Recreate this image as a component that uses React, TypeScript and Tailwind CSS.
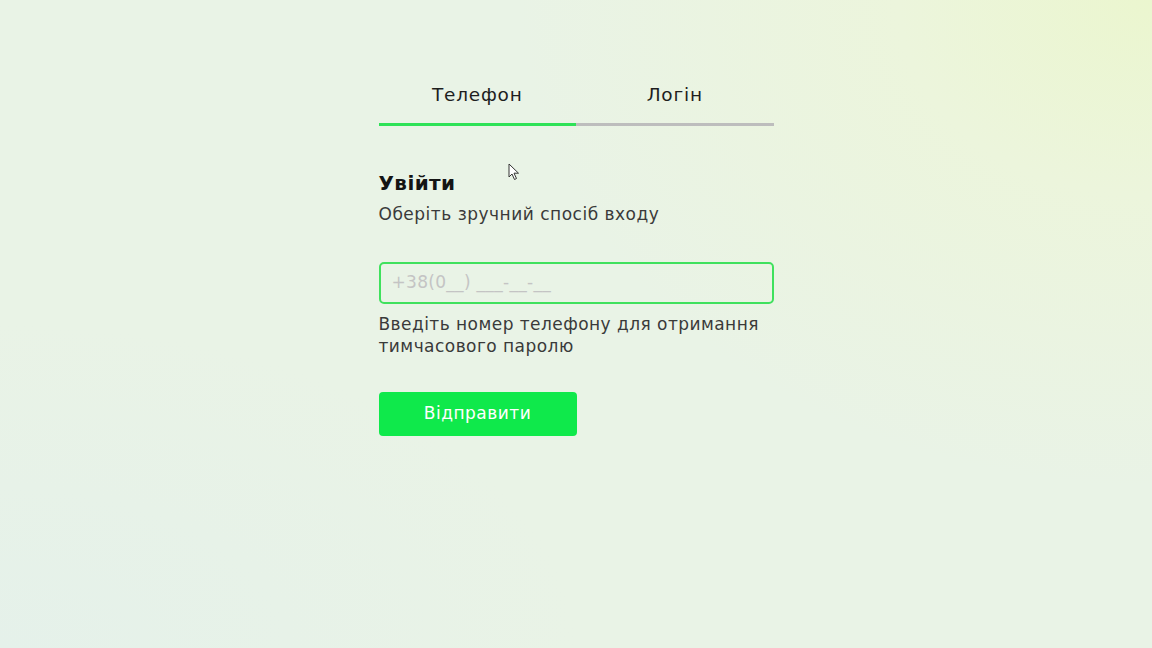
import React from "react";

export default function App() {
  return (
    <div
      className="relative w-[1152px] h-[648px] overflow-hidden bg-[#e9f3e6] bg-[radial-gradient(ellipse_55%_75%_at_100%_0%,#ebf6cf_0%,#ecf5dc_40%,rgba(233,243,230,0)_100%),radial-gradient(ellipse_50%_50%_at_0%_100%,#e5f1ea_0%,rgba(229,241,234,0)_100%)]"
      style={{ fontFamily: '"DejaVu Sans", "Noto Sans", sans-serif' }}
    >
      <div className="flex justify-center pt-[81px]">
        <div className="w-[395px] flex flex-col">
          <div className="flex">
            <div className="flex-1 flex flex-col items-center">
              <span className="text-[18.5px] leading-[28px] text-[#1e1e1e] tracking-[0.8px]">Телефон</span>
              <div className="mt-[14px] h-[3px] w-full bg-[#2ee257]" />
            </div>
            <div className="flex-1 flex flex-col items-center">
              <span className="text-[18.5px] leading-[28px] text-[#1e1e1e] tracking-[0.8px]">Логін</span>
              <div className="mt-[14px] h-[3px] w-full bg-[#bdbdbd]" />
            </div>
          </div>
          <h1 className="mt-[43px] text-[20px] leading-[28px] font-bold text-[#141414] tracking-[0.4px]">Увійти</h1>
          <p className="mt-[5px] text-[17px] leading-[24px] text-[#3a3a3a] tracking-[0.5px]">Оберіть зручний спосіб входу</p>
          <div className="mt-[36px] h-[42px] rounded-[5px] border-2 border-[#3fe15d] flex items-center px-[11px]">
            <span className="text-[17px] text-[#c4c4c4] tracking-[0.3px]">+38(0__) ___-__-__</span>
          </div>
          <p className="mt-[9px] text-[17px] leading-[22px] text-[#3a3a3a] tracking-[0.45px]">
            Введіть номер телефону для отримання
            <br />
            тимчасового паролю
          </p>
          <button className="mt-[35px] w-[198px] h-[44px] rounded-[4px] bg-[#0fe94b] text-white text-[17px] tracking-[0.5px]">
            Відправити
          </button>
        </div>
      </div>
      <svg className="absolute left-[508px] top-[163px]" width="12" height="18" viewBox="0 0 12 18">
        <path d="M1 1 L1 14 L4 11 L6.5 16.5 L8.5 15.5 L6 10.2 L10.5 10.2 Z" fill="#fff" stroke="#333" strokeWidth="1" strokeLinejoin="round" />
      </svg>
    </div>
  );
}
